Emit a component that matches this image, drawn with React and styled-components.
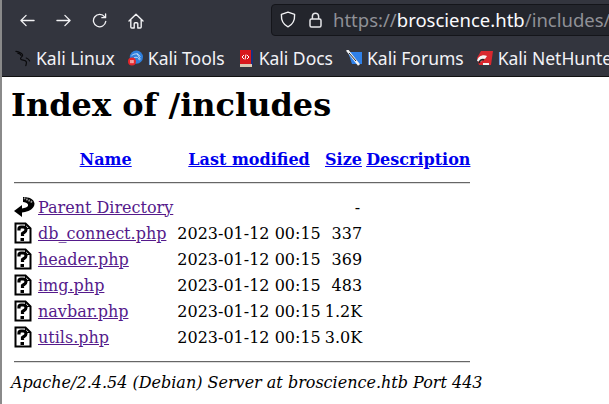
import React from "react";
import styled, { createGlobalStyle } from "styled-components";

const Global = createGlobalStyle`
  html, body { margin: 0; padding: 0; background: #fff; overflow: hidden; }
  #root { width: 609px; height: 404px; }
`;
const Shell = styled.div`
  width: 609px; height: 404px; display: flex; flex-direction: column; overflow: hidden;
  border-left: 2px solid #8a8a8a; box-sizing: border-box; background: #fff;
`;
const Chrome = styled.div`
  height: 77px; flex: none; background: #33353e; border-bottom: 1px solid #111; box-sizing: border-box;
  display: flex; flex-direction: column; overflow: hidden;
`;
const Toolbar = styled.div`
  height: 39px; flex: none; display: flex; align-items: center; padding-left: 18px;
`;
const NavButton = styled.div`
  width: 36px; flex: none; height: 24px; padding-top: 2px; display: flex; align-items: center; justify-content: flex-start; color: #f2f2f4;
  &:last-of-type { width: 35px; }
`;
const UrlBar = styled.div`
  margin-left: 107px; flex: none; width: 360px; height: 32px; background: #23252c; border: 1px solid #14151a;
  border-radius: 4px 0 0 4px; box-sizing: border-box; display: flex; align-items: center; padding-left: 8px;
  color: #f2f2f4; font: 18.5px "Noto Sans", sans-serif; white-space: nowrap;
`;
const LockBox = styled.span`display: flex; margin-left: 13px; margin-right: 11px;`;
const Dim = styled.span`color: #8f9096;`;
const Host = styled.span`color: #fbfbfe;`;
const Bookmarks = styled.div`
  height: 37px; box-sizing: border-box; padding: 1px 0 0 13px; display: flex; align-items: center; gap: 13px; white-space: nowrap;
`;
const Bookmark = styled.div`
  display: flex; align-items: center; flex: none; gap: ${(p) => p.$gap || 5}px; margin-left: ${(p) => p.$lead || 0}px;
  color: #f2f2f6; font: 17.5px "Noto Sans", sans-serif;
`;
const Page = styled.div`
  padding: 0 0 0 9px; color: #000; font-family: "DejaVu Serif", serif; font-size: 16px; flex: 1;
`;
const Title = styled.h1`
  font-size: 32px; font-weight: 700; margin: 9px 0 21px; line-height: 38px;
`;
const Table = styled.table`
  border-collapse: separate; border-spacing: 2px; margin-left: 0;
  th, td { padding: 1px; font-size: 16px; line-height: 19px; height: 22px; white-space: nowrap; }
  a { color: #551a8b; }
  th a { color: #0000ee; }
`;
const IconCell = styled.td`
  width: 21px; vertical-align: middle;
  && { padding: 0 0 0 1px; }
  svg { display: block; }
`;
const Right = styled.td`
  text-align: right;
  && { padding-right: ${(p) => p.$inset || 1}px; }
`;
const RuleCell = styled.th`
  && { padding: 0; height: auto; }
  hr { margin: ${(p) => (p.$last ? "10px 1px 8px" : "9px 1px 9px")}; border: none; border-top: 1px solid #666; border-bottom: 1px solid #ddd; height: 0; }
`;
const Address = styled.address`
  font-size: 16px; line-height: 19px; margin-top: 0; padding-left: 0;
`;

const Stroke = { fill: "none", stroke: "currentColor", strokeWidth: 1.4, strokeLinecap: "round", strokeLinejoin: "round" };

const Back = () => <svg width="15" height="15" viewBox="0 0 16 16" {...Stroke}><path d="M15 8H1M6.500 2.500 1 8l5.500 5.500" /></svg>;
const Forward = () => <svg width="15" height="15" viewBox="0 0 16 16" {...Stroke}><path d="M1 8h14M9.500 2.500 15 8l-5.500 5.500" /></svg>;
const Reload = () => <svg width="15" height="15" viewBox="0 0 16 16" {...Stroke}><path d="M13.500 4.200A6.600 6.600 0 1 0 14.700 9" /><path d="M14.500 1v4h-4" /></svg>;
const Home = () => <svg width="16" height="16" viewBox="0 0 16 16" {...Stroke}><path d="M1 8 8 1.200 15 8M2.800 6.800V14a1 1 0 0 0 1 1h2.400v-4.200a1 1 0 0 1 1-1h1.600a1 1 0 0 1 1 1V15h2.400a1 1 0 0 0 1-1V6.800" /></svg>;
const Shield = () => <svg width="16" height="17" viewBox="0 0 16 17" {...Stroke}><path d="M8 1.200 14.600 3.400c.3 6-1.800 10.300-6.600 12.400C3.200 13.700 1.100 9.400 1.400 3.400z" /></svg>;
const Lock = () => <svg width="13" height="16" viewBox="0 0 13 16" fill="none" stroke="#e6e6e9" strokeWidth="1.500"><path d="M3.400 7V4.300a3.100 3.100 0 0 1 6.200 0V7" /><rect x="1" y="7" width="11" height="8" rx="1.500" /></svg>;

const KaliIcon = () => <svg width="16" height="17" viewBox="0 0 17 17" fill="none" stroke="#0a0a0c" strokeWidth="1.300" strokeLinecap="round"><path d="M1 1c3 .5 6 1.500 7 3.500C9 6.500 5 7 6 9s5 .5 6 3c.5 1.500 0 2.500-.5 4" /><path d="M3 2.800c2 .6 3 1.200 3.500 2.400M12 8c1.500.6 3 1.600 3.500 3" /></svg>;
const ToolsIcon = () => <svg width="15" height="16" viewBox="0 0 17 17"><circle cx="9.500" cy="7.500" r="7.500" fill="#2f7fdc" /><path d="M4 6c3-3 8-3 10 1M7 8c3-1 5 0 6 3M10 3l4 7" stroke="#cfe4fa" strokeWidth="1" fill="none" /><circle cx="4.500" cy="12.500" r="4.500" fill="#e5262b" /><rect x="2.800" y="10.800" width="1.200" height="3.600" fill="#fff" /><rect x="5" y="10.800" width="1.200" height="3.600" fill="#fff" /></svg>;
const DocsIcon = () => <svg width="13" height="17" viewBox="0 0 13 17"><rect x="0" y="0" width="13" height="15" fill="#1c2f7a" /><rect x="0" y="0" width="11" height="14" fill="#d8171c" /><rect x="0" y="14" width="12" height="3" fill="#d9c9b4" /><path d="M4 5 2 7l2 2M7 5 9 7 7 9M6 4.500 5 9.500" stroke="#fff" strokeWidth="1" fill="none" /></svg>;
const ForumsIcon = () => <svg width="16" height="16" viewBox="0 0 16 16"><path d="M2 2h14v12H6z" fill="#2f80e8" /><path d="M1 0l4 5 4 5 4 5" stroke="#f3f3f3" strokeWidth="2.500" fill="none" /><path d="M3 3l7 8" stroke="#222" strokeWidth="1" /></svg>;
const NetHunterIcon = () => <svg width="16" height="16" viewBox="0 0 16 16"><path d="M4 1h12l-2 14H2l-2-7z" fill="#d9282f" /><path d="M0 11c1-5 6-7 10-5l-2 3c-2-1-3 0-4 3z" fill="#f4f4f4" /><path d="M2 13c1-3 3-4 5-3" stroke="#222" strokeWidth="1.500" fill="none" /><path d="M6 14h6" stroke="#f4f4f4" strokeWidth="2" /></svg>;

const Unknown = () => (
  <svg width="18" height="22" viewBox="0 0 18 22">
    <path d="M1.500 1.500h10l5 5v14h-15z" fill="#fff" stroke="#000" strokeWidth="2" />
    <path d="M11.500 1.500v5h5" fill="none" stroke="#000" strokeWidth="1" />
    <path d="M5 8.500V7q0-2 2-2h2q3 0 3 2.500 0 2-2 3l-1.500 1V14" fill="none" stroke="#000" strokeWidth="3.200" />
    <rect x="6.500" y="16" width="3.500" height="3" fill="#000" />
  </svg>
);
const ParentIcon = () => (
  <svg width="21" height="22" viewBox="0 0 21 22">
    <path d="M9 1c6 0 11 2 11.500 6.500 0 5-5 7.500-9.500 8.500l-3 .5V21L0 15l8-6v3.500l2-.5c3-.5 4.500-1.500 4-3.500C13.500 7 11 6 9 6z" fill="#000" />
    <path d="M10 2l9 4.500" stroke="#9a9a9a" strokeWidth="2" strokeDasharray="1.500 1" />
  </svg>
);

const files = [
  ["db_connect.php", "337"],
  ["header.php", "369"],
  ["img.php", "483"],
  ["navbar.php", "1.2K"],
  ["utils.php", "3.0K"],
];
const date = "2023-01-12 00:15";

export default function App() {
  return (
    <Shell>
      <Global />
      <Chrome>
        <Toolbar>
          <NavButton><Back /></NavButton>
          <NavButton><Forward /></NavButton>
          <NavButton><Reload /></NavButton>
          <NavButton><Home /></NavButton>
          <UrlBar>
            <Shield />
            <LockBox><Lock /></LockBox>
            <Dim>https://</Dim><Host>broscience.htb</Host><Dim>/includes/</Dim>
          </UrlBar>
        </Toolbar>
        <Bookmarks>
          <Bookmark><KaliIcon />Kali Linux</Bookmark>
          <Bookmark><ToolsIcon />Kali Tools</Bookmark>
          <Bookmark $lead={2} $gap={6}><DocsIcon />Kali Docs</Bookmark>
          <Bookmark><ForumsIcon />Kali Forums</Bookmark>
          <Bookmark><NetHunterIcon />Kali NetHunter</Bookmark>
        </Bookmarks>
      </Chrome>
      <Page>
        <Title>Index of /includes</Title>
        <Table>
          <tbody>
            <tr>
              <th />
              <th><a href="#n">Name</a></th>
              <th><a href="#m">Last modified</a></th>
              <th><a href="#s">Size</a></th>
              <th><a href="#d">Description</a></th>
            </tr>
            <tr><RuleCell colSpan="5"><hr /></RuleCell></tr>
            <tr>
              <IconCell><ParentIcon /></IconCell>
              <td><a href="#p">Parent Directory</a></td>
              <td>&nbsp;</td>
              <Right $inset={3}>-</Right>
              <td>&nbsp;</td>
            </tr>
            {files.map(([name, size]) => (
              <tr key={name}>
                <IconCell><Unknown /></IconCell>
                <td><a href={`#${name}`}>{name}</a></td>
                <Right>{date}</Right>
                <Right>{size}</Right>
                <td>&nbsp;</td>
              </tr>
            ))}
            <tr><RuleCell colSpan="5" $last><hr /></RuleCell></tr>
          </tbody>
        </Table>
        <Address><em>Apache/2.4.54 (Debian) Server at broscience.htb Port 443</em></Address>
      </Page>
    </Shell>
  );
}
